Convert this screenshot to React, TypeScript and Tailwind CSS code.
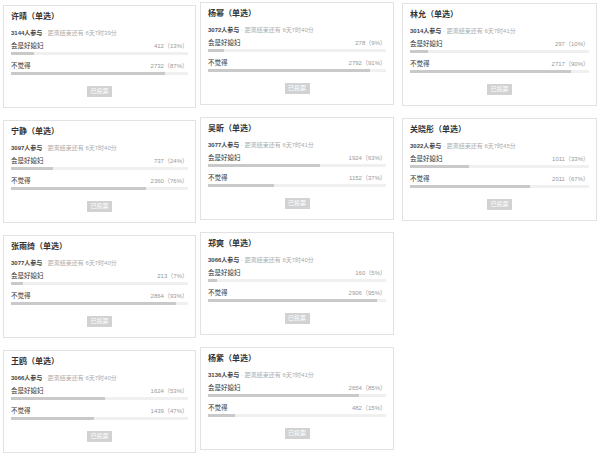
type Poll = {
  name: string;
  total: number;
  left: string;
  yes: [number, number];
  no: [number, number];
};

const columns: { offset: string; width: string; polls: Poll[] }[] = [
  {
    offset: "mt-[5px]",
    width: "w-[193px]",
    polls: [
      { name: "许晴", total: 3144, left: "6天7时39分", yes: [412, 13], no: [2732, 87] },
      { name: "宁静", total: 3097, left: "6天7时40分", yes: [737, 24], no: [2360, 76] },
      { name: "张雨绮", total: 3077, left: "6天7时40分", yes: [213, 7], no: [2864, 93] },
      { name: "王鸥", total: 3066, left: "6天7时40分", yes: [1624, 53], no: [1439, 47] },
    ],
  },
  {
    offset: "mt-[2px]",
    width: "w-[194px]",
    polls: [
      { name: "杨幂", total: 3072, left: "6天7时40分", yes: [278, 9], no: [2792, 91] },
      { name: "吴昕", total: 3077, left: "6天7时41分", yes: [1924, 63], no: [1152, 37] },
      { name: "郑爽", total: 3066, left: "6天7时40分", yes: [160, 5], no: [2906, 95] },
      { name: "杨紫", total: 3136, left: "6天7时41分", yes: [2654, 85], no: [482, 15] },
    ],
  },
  {
    offset: "mt-[3px]",
    width: "w-[195px]",
    polls: [
      { name: "林允", total: 3014, left: "6天7时41分", yes: [297, 10], no: [2717, 90] },
      { name: "关晓彤", total: 3022, left: "6天7时45分", yes: [1011, 33], no: [2011, 67] },
    ],
  },
];

function Option({ label, count, pct }: { label: string; count: number; pct: number }) {
  return (
    <div>
      <div className="flex h-[8px] items-center justify-between leading-[8px]">
        <span className="text-[6.5px] text-[#333]">{label}</span>
        <span className="text-[6px] text-[#999]">
          {count}（{pct}%）
        </span>
      </div>
      <div className="mt-[2px] h-[3px] bg-[#f0f0f0]">
        <div className="h-full bg-[#c9c9c9]" style={{ width: `${pct}%` }} />
      </div>
    </div>
  );
}

function PollCard({ poll }: { poll: Poll }) {
  return (
    <div className="h-[103px] border border-[#e2e2e2] bg-white px-[7px] pt-[6px]">
      <h3 className="h-[10px] text-[8px] font-bold leading-[10px] text-[#333]">
        {poll.name}（单选）
      </h3>
      <p className="mt-[7px] h-[8px] whitespace-nowrap text-[6px] leading-[8px]">
        <span className="font-semibold text-[#444]">{poll.total}人参与</span>
        <span className="text-[#aaa]"> · 距离结束还有 {poll.left}</span>
      </p>
      <div className="mt-[5px] flex flex-col gap-[7px]">
        <Option label="会是好媳妇" count={poll.yes[0]} pct={poll.yes[1]} />
        <Option label="不觉得" count={poll.no[0]} pct={poll.no[1]} />
      </div>
      <div className="mt-[11px] flex justify-center">
        <span className="flex h-[11px] w-[25px] items-center justify-center bg-[#d2d2d2] text-[6px] text-white">
          已投票
        </span>
      </div>
    </div>
  );
}

export default function App() {
  return (
    <div
      className="flex h-[456px] w-[600px] items-start overflow-hidden bg-white pl-[3px]"
      style={{ fontFamily: '"Liberation Sans", "Noto Sans CJK SC", sans-serif' }}
    >
      {columns.map((col, i) => (
        <div
          key={i}
          className={`${col.offset} ${col.width} ${i === 1 ? "ml-[4px]" : i === 2 ? "ml-[8px]" : ""} flex flex-col gap-[12px]`}
        >
          {col.polls.map((p) => (
            <PollCard key={p.name} poll={p} />
          ))}
        </div>
      ))}
    </div>
  );
}
